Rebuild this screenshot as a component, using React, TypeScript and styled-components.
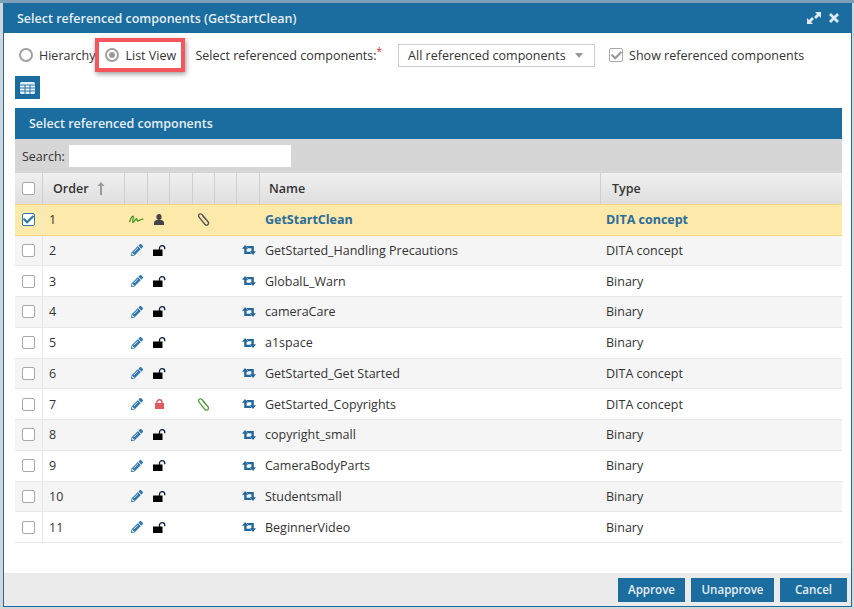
import React from 'react';
import styled, { createGlobalStyle } from 'styled-components';
import { FaCheck, FaPencilAlt } from 'react-icons/fa';

const GlobalStyle = createGlobalStyle`
  html, body {
    margin: 0;
    padding: 0;
    width: 854px;
    height: 609px;
    overflow: hidden;
    font-family: "Open Sans", "Liberation Sans", sans-serif;
    font-size: 12.5px;
    color: #333333;
  }
  * { box-sizing: border-box; }
`;

const Backdrop = styled.div`
  width: 854px;
  height: 609px;
  padding: 0 2px 2px 3px;
  border-top: 3px solid #7d9fb8;
  background-color: #d3d6d8;
`;

const Dialog = styled.div`
  height: 100%;
  display: flex;
  flex-direction: column;
  background-color: #ffffff;
  border: 1px solid #1b6c9f;
  border-top: none;
`;

const TitleBar = styled.div`
  height: 30px;
  flex: none;
  display: flex;
  align-items: center;
  justify-content: space-between;
  margin: 0 -1px;
  padding: 0 13px 0 14px;
  background-color: #1b6c9f;
  color: #e6eff5;
  font-weight: 600;
  font-size: 12.5px;
`;

const TitleIcons = styled.div`
  display: flex;
  align-items: center;
  gap: 8px;
  color: #dfe9f0;
`;

const Body = styled.div`
  flex: 1;
  padding: 0 9px 0 11px;
`;

const Options = styled.div`
  height: 43px;
  display: flex;
  align-items: center;
  padding-top: 1px;
  font-size: 12.5px;
`;

const Radio = styled.span<{ $checked?: boolean }>`
  width: 14px;
  height: 14px;
  flex: none;
  display: inline-flex;
  align-items: center;
  justify-content: center;
  border: 2px solid #a0a0a0;
  border-radius: 50%;
  margin: 0 6px 0 0;
  &::after {
    content: '';
    width: 6px;
    height: 6px;
    border-radius: 50%;
    background-color: ${(p) => (p.$checked ? '#9a9a9a' : 'transparent')};
  }
`;

const RadioLabel = styled.label`
  display: flex;
  align-items: center;
  margin-left: 4px;
`;

const Highlight = styled.label`
  display: flex;
  align-items: center;
  width: 90px;
  height: 34px;
  margin: 0 10px 0 0;
  padding-left: 6px;
  border: 4px solid #f4565c;
  box-shadow: 1px 2px 5px rgba(0, 0, 0, 0.4);
`;

const FieldLabel = styled.span`
  margin-right: 16px;
  sup {
    color: #e0262c;
    font-size: 10px;
    line-height: 0;
  }
`;

const Select = styled.div`
  width: 197px;
  height: 23px;
  display: flex;
  align-items: center;
  justify-content: space-between;
  padding: 0 11px 0 9px;
  border: 1px solid #cccccc;
  margin-right: 14px;
  &::after {
    content: '';
    border-left: 4.5px solid transparent;
    border-right: 4.5px solid transparent;
    border-top: 5px solid #999999;
  }
`;

const CheckBox = styled.span<{ $checked?: boolean; $blue?: boolean; $size?: number }>`
  width: ${(p) => p.$size || 13}px;
  height: ${(p) => p.$size || 13}px;
  flex: none;
  display: inline-flex;
  align-items: center;
  justify-content: center;
  border: 1.5px solid ${(p) => (p.$blue ? '#2f79ad' : '#a9a9a9')};
  border-radius: 2px;
  background-color: #ffffff;
  color: ${(p) => (p.$blue ? '#2f79ad' : '#9a9a9a')};
  font-size: 11px;
`;

const ShowRefs = styled.label`
  display: flex;
  align-items: center;
  gap: 6px;
`;

const GridButton = styled.div`
  width: 25px;
  height: 23px;
  display: flex;
  align-items: center;
  justify-content: center;
  background-color: #1b6c9f;
`;

const Panel = styled.div`
  margin-top: 9px;
`;

const PanelHeader = styled.div`
  height: 31px;
  display: flex;
  align-items: center;
  padding-left: 14px;
  background-color: #1b6c9f;
  color: #e6eff5;
  font-weight: 600;
`;

const SearchBar = styled.div`
  height: 34px;
  display: flex;
  align-items: center;
  gap: 4px;
  padding-left: 7px;
  background-color: #d6d6d6;
`;

const SearchInput = styled.div`
  width: 222px;
  height: 22px;
  background-color: #ffffff;
`;

const columns = '28px 82px 23px 22px 23px 22px 22px 23px 341px 241px';

const HeadRow = styled.div`
  height: 31px;
  display: grid;
  grid-template-columns: ${columns};
  background: linear-gradient(#f0f0f0, #dedede);
  font-weight: 600;
`;

const HeadCell = styled.div<{ $pad?: number }>`
  display: flex;
  align-items: center;
  padding-left: ${(p) => p.$pad ?? 10}px;
  border-right: 1px solid #cfcfcf;
  &:last-child {
    border-right: none;
  }
`;

const SortArrow = styled.svg`
  margin-left: 8px;
`;

const Row = styled.div<{ $selected?: boolean; $odd?: boolean }>`
  height: ${(p) => (p.$selected ? '31.6px' : '30.75px')};
  display: grid;
  grid-template-columns: ${columns};
  background-color: ${(p) => (p.$selected ? '#fde9a9' : p.$odd ? '#f5f5f5' : '#ffffff')};
  border-top: ${(p) => (p.$selected ? '1px solid #f4d77a' : 'none')};
  border-bottom: ${(p) => (p.$selected ? '1px solid #f4d77a' : '1px solid #e8e8e8')};
  font-size: 12.5px;
`;

const CheckCell = styled.div`
  display: flex;
  align-items: center;
  justify-content: center;
  padding-right: 1px;
  border-right: 1px solid #e6e6e6;
`;

const Cell = styled.div<{ $strong?: boolean; $pad?: number }>`
  display: flex;
  align-items: center;
  padding-left: ${(p) => p.$pad ?? 5}px;
  white-space: nowrap;
  color: ${(p) => (p.$strong ? '#2a6c9c' : '#333333')};
  font-weight: ${(p) => (p.$strong ? 700 : 400)};
`;

const IconCell = styled.div<{ $color?: string }>`
  display: flex;
  align-items: center;
  justify-content: center;
  font-size: 12px;
  color: ${(p) => p.$color || '#000000'};
`;

const Footer = styled.div`
  height: 33px;
  flex: none;
  display: flex;
  align-items: center;
  justify-content: flex-end;
  gap: 6px;
  padding: 0 4px 0 0;
  background-color: #ebebeb;
`;

const Button = styled.button<{ $width: number }>`
  width: ${(p) => p.$width}px;
  height: 24px;
  padding: 0;
  border: none;
  background-color: #1b6c9f;
  color: #e6eff5;
  font-family: inherit;
  font-size: 11.6px;
  font-weight: 600;
`;

const Signature = () => (
  <svg width="15" height="9" viewBox="0 0 15 9" fill="none" stroke="#2f8a12" strokeWidth="1.2">
    <path d="M0.5 7 C1.5 4 3 1 4 1 C5 1 3 7 4 7.5 C5 7.5 6.5 3.5 7.5 3.5 C8.5 3.5 7.5 6.5 9 6 C10.5 5.5 12 4 14.5 4" />
  </svg>
);

const UserIcon = () => (
  <svg width="10" height="11" viewBox="0 0 10 11" fill="#444444">
    <ellipse cx="5" cy="3" rx="2.6" ry="3" />
    <path d="M0 11 V8.5 C0 7 2 6.3 3 6 H7 C8 6.3 10 7 10 8.5 V11 Z" />
  </svg>
);

const ClipIcon = ({ color }: { color: string }) => (
  <svg width="12" height="13" viewBox="0 0 12 13" fill="none" stroke={color} strokeWidth="1.4">
    <path d="M10.8 9.6 L4.4 2 C3.3 0.7 1.8 0.6 1.1 1.3 C0.3 2 0.5 3.4 1.5 4.6 L6.8 11.2 C7.7 12.2 9 12.3 9.9 11.6 C10.8 10.8 10.7 9.6 9.8 8.6 L4.6 2.8" />
  </svg>
);

const UnlockIcon = () => (
  <svg width="13" height="11" viewBox="0 0 13 11">
    <rect x="0" y="4.5" width="9.5" height="6.5" fill="#000000" />
    <path d="M6.5 5 V3 a2.6 2.3 0 0 1 5.2 0 V4.2" fill="none" stroke="#0b1b3a" strokeWidth="1.3" />
  </svg>
);

const LockIcon = () => (
  <svg width="9" height="10" viewBox="0 0 9 10">
    <rect x="0" y="4" width="9" height="6" fill="#e05a5f" />
    <path d="M2 4.5 V3 a2.5 2.3 0 0 1 5 0 V4.5" fill="none" stroke="#e05a5f" strokeWidth="1.4" />
  </svg>
);

const RetweetIcon = () => (
  <svg width="14" height="10" viewBox="0 0 14 10" fill="#22689c">
    <path d="M3 0 L6.2 3.8 H4.6 V6.8 H8 L9.8 9 H2.2 V3.8 H0 Z" />
    <path d="M11 10 L7.8 6.2 H9.4 V3.2 H6 L4.2 1 H11.8 V6.2 H14 Z" />
  </svg>
);

const TableIcon = () => (
  <svg width="15" height="12" viewBox="0 0 15 12">
    <rect width="15" height="12" rx="1.5" fill="#e6eff5" />
    <path d="M5 3 V12 M10 3 V12 M0 3 H15 M0 6 H15 M0 9 H15" stroke="#1b6c9f" strokeWidth="0.9" />
  </svg>
);

const ExpandIcon = () => (
  <svg width="14" height="12" viewBox="0 0 14 12" fill="currentColor">
    <path d="M8 0 H14 V6 L12 4 L9 7 L7 5 L10 2 Z" />
    <path d="M0 12 V6 L2 8 L5 5 L7 7 L4 10 L6 12 Z" />
  </svg>
);

const CloseIcon = () => (
  <svg width="10" height="10" viewBox="0 0 10 10" stroke="currentColor" strokeWidth="2.8">
    <path d="M1 1 L9 9 M9 1 L1 9" />
  </svg>
);

type Item = {
  name: string;
  type: string;
};

const items: Item[] = [
  { name: 'GetStarted_Handling Precautions', type: 'DITA concept' },
  { name: 'GlobalL_Warn', type: 'Binary' },
  { name: 'cameraCare', type: 'Binary' },
  { name: 'a1space', type: 'Binary' },
  { name: 'GetStarted_Get Started', type: 'DITA concept' },
  { name: 'GetStarted_Copyrights', type: 'DITA concept' },
  { name: 'copyright_small', type: 'Binary' },
  { name: 'CameraBodyParts', type: 'Binary' },
  { name: 'Studentsmall', type: 'Binary' },
  { name: 'BeginnerVideo', type: 'Binary' },
];

const App: React.FunctionComponent = () => {
  return (
    <Backdrop>
      <GlobalStyle />
      <Dialog>
        <TitleBar>
          <span>Select referenced components (GetStartClean)</span>
          <TitleIcons>
            <ExpandIcon />
            <CloseIcon />
          </TitleIcons>
        </TitleBar>
        <Body>
          <Options>
            <RadioLabel>
              <Radio />
              Hierarchy
            </RadioLabel>
            <Highlight>
              <Radio $checked />
              List View
            </Highlight>
            <FieldLabel>
              Select referenced components:<sup>*</sup>
            </FieldLabel>
            <Select>All referenced components</Select>
            <ShowRefs>
              <CheckBox $size={14}>
                <FaCheck />
              </CheckBox>
              Show referenced components
            </ShowRefs>
          </Options>
          <GridButton>
            <TableIcon />
          </GridButton>
          <Panel>
            <PanelHeader>Select referenced components</PanelHeader>
            <SearchBar>
              Search:
              <SearchInput />
            </SearchBar>
            <HeadRow>
              <HeadCell $pad={7}>
                <CheckBox />
              </HeadCell>
              <HeadCell>
                Order
                <SortArrow width="8" height="13" viewBox="0 0 8 13" fill="#9a9a9a">
                  <path d="M4 0 L7.5 4 H5 V13 H3 V4 H0.5 Z" />
                </SortArrow>
              </HeadCell>
              <HeadCell />
              <HeadCell />
              <HeadCell />
              <HeadCell />
              <HeadCell />
              <HeadCell />
              <HeadCell $pad={9}>Name</HeadCell>
              <HeadCell $pad={11}>Type</HeadCell>
            </HeadRow>
            <Row $selected>
              <CheckCell>
                <CheckBox $blue>
                  <FaCheck />
                </CheckBox>
              </CheckCell>
              <Cell $pad={6}>1</Cell>
              <IconCell>
                <Signature />
              </IconCell>
              <IconCell>
                <UserIcon />
              </IconCell>
              <IconCell />
              <IconCell>
                <ClipIcon color="#555555" />
              </IconCell>
              <IconCell />
              <IconCell />
              <Cell $strong>GetStartClean</Cell>
              <Cell $strong>DITA concept</Cell>
            </Row>
            {items.map((item, i) => (
              <Row key={item.name} $odd={i % 2 === 0}>
                <CheckCell>
                  <CheckBox />
                </CheckCell>
                <Cell $pad={6}>{i + 2}</Cell>
                <IconCell $color="#2f78b0">
                  <FaPencilAlt />
                </IconCell>
                <IconCell>{item.name === 'GetStarted_Copyrights' ? <LockIcon /> : <UnlockIcon />}</IconCell>
                <IconCell />
                <IconCell>{item.name === 'GetStarted_Copyrights' && <ClipIcon color="#5c9e45" />}</IconCell>
                <IconCell />
                <IconCell>
                  <RetweetIcon />
                </IconCell>
                <Cell>{item.name}</Cell>
                <Cell>{item.type}</Cell>
              </Row>
            ))}
          </Panel>
        </Body>
        <Footer>
          <Button $width={67}>Approve</Button>
          <Button $width={83}>Unapprove</Button>
          <Button $width={67}>Cancel</Button>
        </Footer>
      </Dialog>
    </Backdrop>
  );
};

export default App;
